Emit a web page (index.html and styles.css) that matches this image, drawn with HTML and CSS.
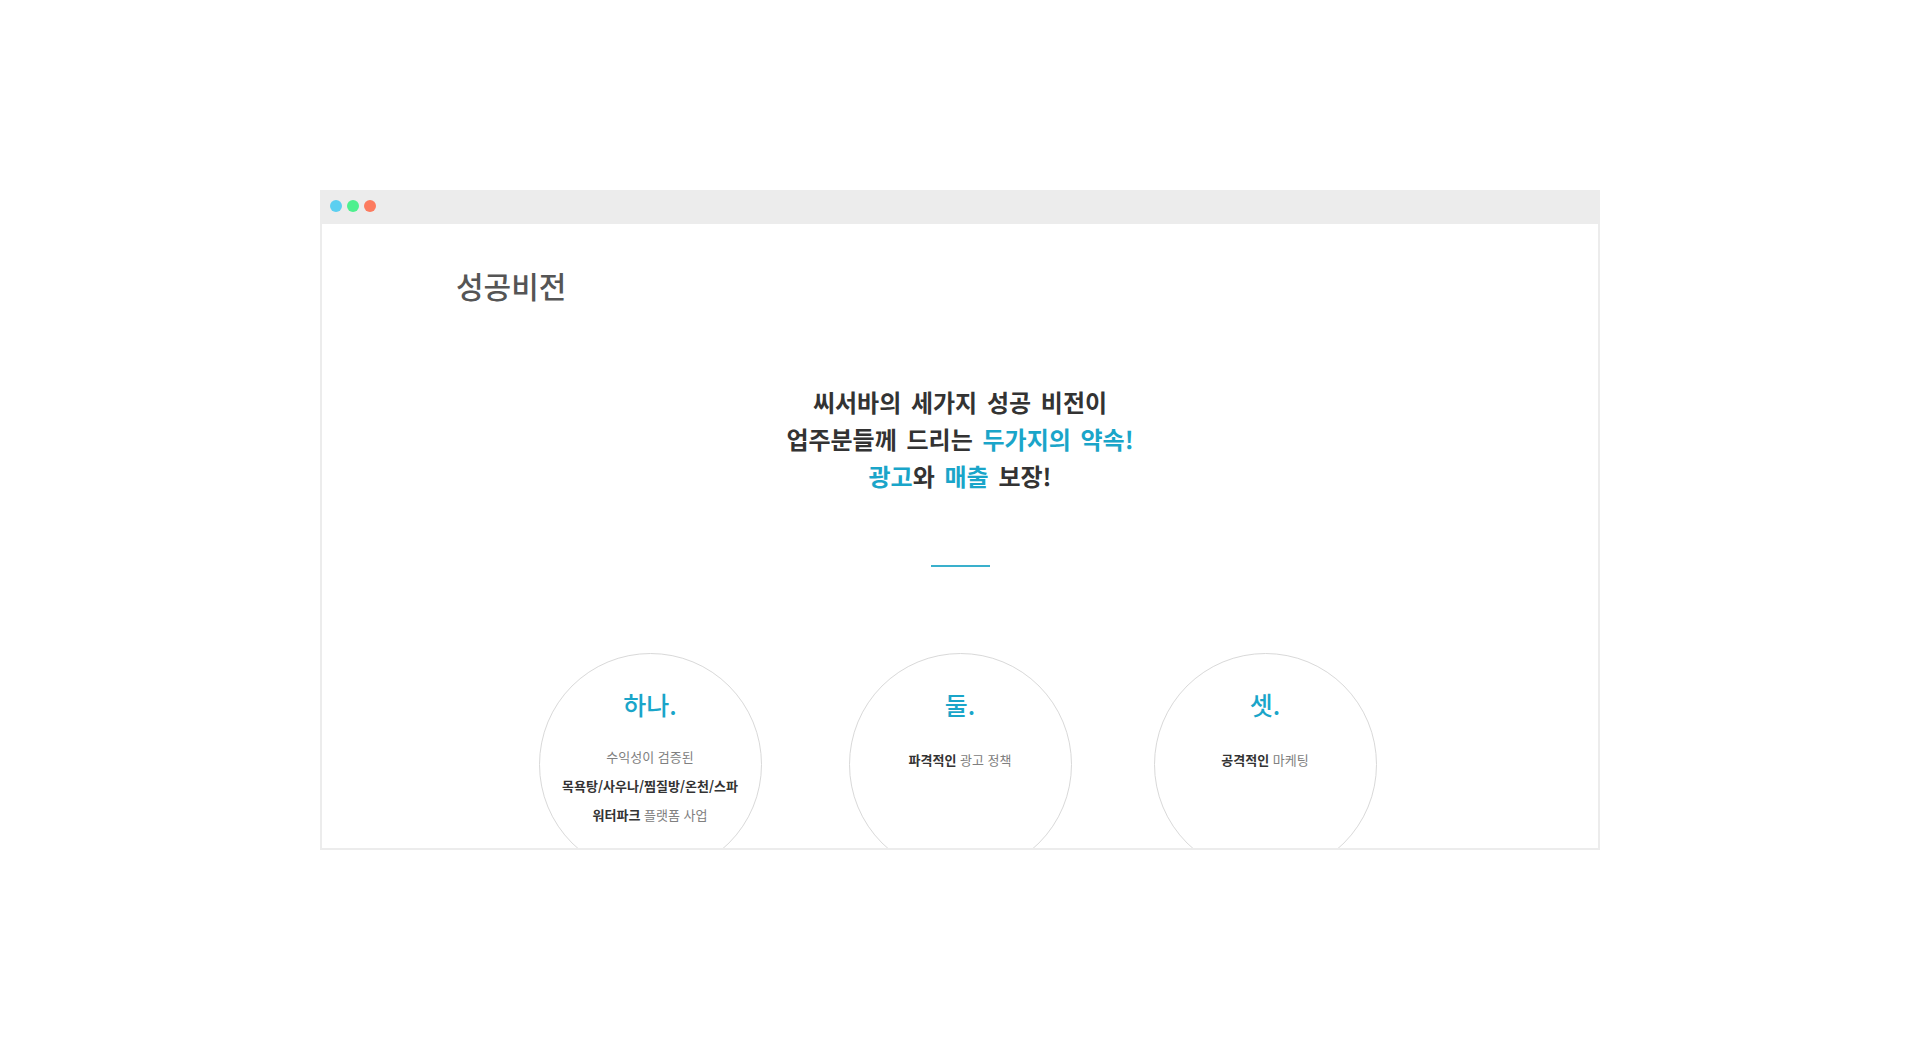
FILE: index.html
```html
<!DOCTYPE html>
<html lang="ko">
<head>
<meta charset="utf-8">
<title>성공비전</title>
<link rel="stylesheet" href="styles.css">
</head>
<body>
<div class="window">
  <div class="titlebar">
    <span class="dot dot-blue"></span>
    <span class="dot dot-green"></span>
    <span class="dot dot-orange"></span>
  </div>
  <div class="content">
    <h1 class="page-title">성공비전</h1>
    <p class="headline">
      씨서바의 세가지 성공 비전이<br>
      업주분들께 드리는 <span class="accent">두가지의 약속!</span><br>
      <span class="accent">광고</span>와 <span class="accent">매출</span> 보장!
    </p>
    <div class="divider"></div>
    <div class="circles">
      <div class="circle c1">
        <div class="circle-title">하나.</div>
        <div class="circle-text">
          <div class="muted">수익성이 검증된</div>
          <div class="strong">목욕탕/사우나/찜질방/온천/스파</div>
          <div><span class="strong">워터파크</span> <span class="muted">플랫폼 사업</span></div>
        </div>
      </div>
      <div class="circle c2">
        <div class="circle-title">둘.</div>
        <div class="circle-text">
          <div><span class="strong">파격적인</span> <span class="muted">광고 정책</span></div>
        </div>
      </div>
      <div class="circle c3">
        <div class="circle-title">셋.</div>
        <div class="circle-text">
          <div><span class="strong">공격적인</span> <span class="muted">마케팅</span></div>
        </div>
      </div>
    </div>
  </div>
</div>
</body>
</html>
```
FILE: styles.css
```css
* { box-sizing: border-box; }
html, body {
  margin: 0;
  padding: 0;
  background: #ffffff;
}
body {
  font-family: "Noto Sans CJK KR", "Noto Sans", sans-serif;
  color: #333;
}
.window {
  width: 1280px;
  height: 660px;
  margin: 190px auto 0;
  border: 2px solid #ececec;
  border-top: none;
  display: flex;
  flex-direction: column;
  overflow: hidden;
}
.titlebar {
  height: 34px;
  background: #ececec;
  display: flex;
  align-items: center;
  gap: 5px;
  padding-left: 10px;
  padding-bottom: 2px;
  margin: 0 -2px;
  flex: none;
}
.dot {
  width: 12px;
  height: 12px;
  border-radius: 50%;
  display: block;
}
.dot-blue { background: #5ccff0; }
.dot-green { background: #4ef08e; }
.dot-orange { background: #fc7b5f; }
.content {
  flex: 1;
  overflow: hidden;
  display: flex;
  flex-direction: column;
  align-items: center;
}
.page-title {
  align-self: flex-start;
  margin: 40px 0 0 134px;
  font-size: 30px;
  line-height: 42px;
  font-weight: 500;
  color: #555;
  letter-spacing: 0;
}
.headline {
  margin: 77px 0 0;
  text-align: center;
  font-size: 24px;
  line-height: 37px;
  font-weight: 700;
  word-spacing: 3px;
  color: #333;
}
.accent { color: #1aa5c9; }
.divider {
  width: 59px;
  height: 2px;
  background: #3ab0cc;
  margin-top: 71px;
  flex: none;
}
.circles {
  display: flex;
  margin-top: 86px;
  margin-right: 5px;
  flex: none;
}
.circle {
  width: 223px;
  height: 223px;
  border: 1px solid #d9d9d9;
  border-radius: 50%;
  display: flex;
  flex-direction: column;
  align-items: center;
  padding-top: 35px;
  flex: none;
}
.c2 { margin-left: 87px; }
.c3 { margin-left: 82px; }
.circle-title {
  font-size: 25px;
  line-height: 30px;
  font-weight: 500;
  color: #1aa5c9;
}
.circle-text {
  margin-top: 23px;
  font-size: 13px;
  line-height: 29px;
  text-align: center;
}
.c2 .circle-text, .c3 .circle-text { margin-top: 26px; }
.muted { color: #808080; font-weight: 400; }
.strong { color: #333; font-weight: 700; }
```
